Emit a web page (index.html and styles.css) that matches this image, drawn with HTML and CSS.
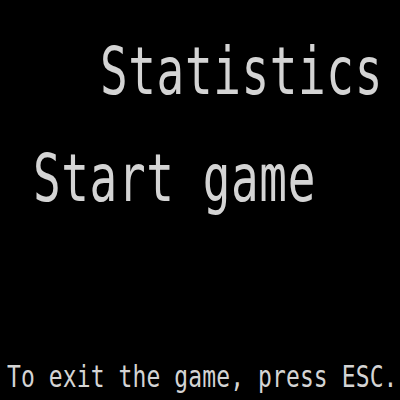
FILE: index.html
```html
<!DOCTYPE html>
<html>
<head>
<meta charset="utf-8">
<link rel="stylesheet" href="styles.css">
</head>
<body>
<div class="screen">
  <div class="menu-item stats">Statistics</div>
  <div class="menu-item start">Start game</div>
  <div class="footer">To exit the game, press ESC.</div>
</div>
</body>
</html>
```
FILE: styles.css
```css
html, body {
  margin: 0;
  padding: 0;
  background: #000;
}
.screen {
  width: 400px;
  height: 400px;
  box-sizing: border-box;
  padding: 38px 0 15px 0;
  display: flex;
  flex-direction: column;
  font-family: "DejaVu Sans Mono", monospace;
  color: #d4d4d4;
  overflow: hidden;
}
.menu-item {
  font-size: 46px;
  line-height: 46px;
  height: 46px;
  white-space: nowrap;
  letter-spacing: 0.6px;
  transform: scaleY(1.43);
  transform-origin: top left;
}
.stats {
  margin-left: 100px;
}
.start {
  margin-top: 61px;
  margin-left: 33px;
}
.footer {
  margin-top: auto;
  margin-left: 7px;
  font-size: 23px;
  line-height: 23px;
  height: 23px;
  letter-spacing: 0.1px;
  white-space: nowrap;
  transform: scaleY(1.31);
  transform-origin: top left;
}
```
